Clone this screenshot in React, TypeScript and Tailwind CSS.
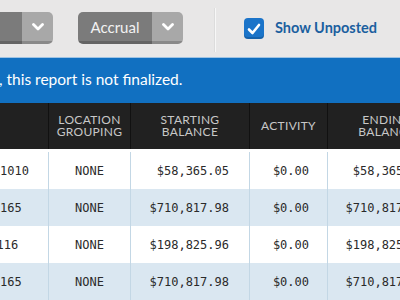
import React from "react";

const Chevron = () => (
  <svg width="12" height="8" viewBox="0 0 12 8" fill="none">
    <polyline points="1.5,1.5 6,6 10.5,1.5" stroke="#ffffff" strokeWidth="2.8" strokeLinecap="round" strokeLinejoin="round" />
  </svg>
);

const rows = [
  { acct: "1010", off: "ml-0", start: "$58,365.05", act: "$0.00", end: "$58,365.05", bg: "bg-white", h: "h-[40px] pt-[3px]" },
  { acct: "165", off: "ml-0", start: "$710,817.98", act: "$0.00", end: "$710,817.98", bg: "bg-[#dae7f1]", h: "h-[37px]" },
  { acct: "116", off: "ml-[-3.5px]", start: "$198,825.96", act: "$0.00", end: "$198,825.96", bg: "bg-white", h: "h-[37px]" },
  { acct: "165", off: "ml-0", start: "$710,817.98", act: "$0.00", end: "$710,817.98", bg: "bg-[#dae7f1]", h: "h-[37px]" },
];

export default function App() {
  return (
    <div className="w-[400px] h-[300px] overflow-hidden bg-[#e8e7e7] font-['Lato',sans-serif]">
      {/* top toolbar */}
      <div className="h-[57px] flex items-start pt-[12px]">
        <div className="ml-[-47px] w-[100px] h-[32px] flex rounded-[5px] overflow-hidden">
          <div className="w-[69px] bg-[#7b7b7b] shadow-[inset_0_-3px_0_rgba(0,0,0,0.18)]" />
          <div className="w-[31px] bg-[#a8a8a8] flex items-center justify-center pb-[2px] shadow-[inset_0_-3px_0_rgba(0,0,0,0.18)]">
            <Chevron />
          </div>
        </div>
        <div className="ml-[25px] w-[105px] h-[32px] flex rounded-[5px] overflow-hidden">
          <div className="w-[74px] bg-[#7b7b7b] flex items-center justify-center pb-[2px] text-[15px] text-[#f2f2f2] shadow-[inset_0_-3px_0_rgba(0,0,0,0.18)]">
            Accrual
          </div>
          <div className="w-[31px] bg-[#a8a8a8] flex items-center justify-center pb-[2px] shadow-[inset_0_-3px_0_rgba(0,0,0,0.18)]">
            <Chevron />
          </div>
        </div>
        <div className="ml-[31px] mt-[-4px] w-[2px] h-[44px] bg-[#f7f7f7] border-l border-[#dcdcdc]" />
        <div className="ml-[28px] mt-[6px] w-[20px] h-[21px] rounded-[4px] bg-[#1b74c9] flex items-center justify-center shadow-[inset_0_-2px_0_rgba(0,0,0,0.15)]">
          <svg width="14" height="12" viewBox="0 0 14 12" fill="none">
            <polyline points="2,6.5 5.5,10 12,2" stroke="#ffffff" strokeWidth="2.6" strokeLinecap="round" strokeLinejoin="round" />
          </svg>
        </div>
        <div className="ml-[11px] mt-[6px] text-[14.5px] leading-[20px] font-bold text-[#1b5f9f]">Show Unposted</div>
      </div>

      {/* blue notice bar */}
      <div className="h-[46px] border-t border-[#9fc3e3] bg-[#1170c1] flex items-center">
        <span className="ml-[-1px] text-[15.5px] text-white pb-[2px]">, this report is not finalized.</span>
      </div>

      {/* table */}
      <div className="w-[445px]">
        <div className="grid grid-cols-[48px_82px_119px_78px_118px] h-[46px] bg-[#212121] text-[#c8c8c8] text-[12px] leading-[12.5px] uppercase tracking-[0.3px]">
          <div />
          <div className="border-l border-[#111111] flex items-center justify-center text-center">
            Location<br />Grouping
          </div>
          <div className="border-l border-[#111111] flex items-center justify-center text-center">
            Starting<br />Balance
          </div>
          <div className="border-l border-[#111111] flex items-center justify-center text-center">Activity</div>
          <div className="border-l border-[#111111] flex items-center justify-center text-center">
            Ending<br />Balance
          </div>
        </div>
        {rows.map((r, i) => (
          <div
            key={i}
            className={`grid grid-cols-[48px_82px_119px_78px_118px] ${r.h} ${r.bg} text-[12px] text-[#2a2a2a] font-['DejaVu_Sans_Mono',monospace]`}
          >
            <div className="flex items-center overflow-hidden whitespace-nowrap">
              <span className={r.off}>{r.acct}</span>
            </div>
            <div className="border-l border-[#c3d7e5] flex items-center justify-center">NONE</div>
            <div className="border-l border-[#c3d7e5] flex items-center justify-end pr-[20px]">{r.start}</div>
            <div className="border-l border-[#c3d7e5] flex items-center justify-end pr-[18px]">{r.act}</div>
            <div className="border-l border-[#c3d7e5] flex items-center justify-end pr-[20px]">{r.end}</div>
          </div>
        ))}
      </div>
    </div>
  );
}
